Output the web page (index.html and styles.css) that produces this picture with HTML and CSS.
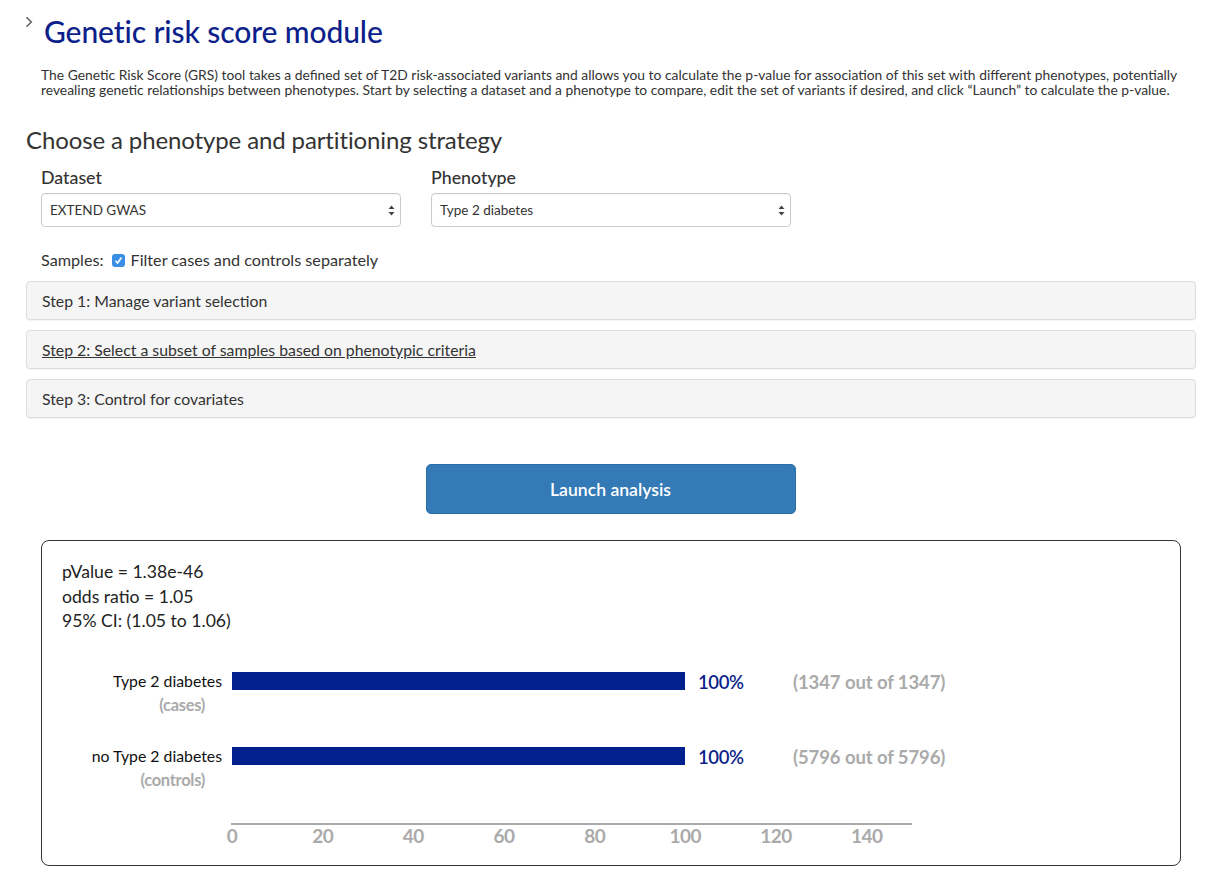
FILE: index.html
```html
<!DOCTYPE html>
<html>
<head>
<meta charset="utf-8">
<link rel="stylesheet" href="styles.css">
</head>
<body>
<div class="page">
  <div class="title-row">
    <svg class="chev" width="8" height="12" viewBox="0 0 8 12"><path d="M1.5 1.2 L6.3 6 L1.5 10.8" fill="none" stroke="#666" stroke-width="1.6"/></svg>
    <h1 class="title">Genetic risk score module</h1>
  </div>
  <p class="intro">The Genetic Risk Score (GRS) tool takes a defined set of T2D risk-associated variants and allows you to calculate the p-value for association of this set with different phenotypes, potentially revealing genetic relationships between phenotypes. Start by selecting a dataset and a phenotype to compare, edit the set of variants if desired, and click “Launch” to calculate the p-value.</p>

  <h2 class="section">Choose a phenotype and partitioning strategy</h2>

  <div class="selectors">
    <div class="field">
      <div class="label">Dataset</div>
      <div class="select"><span>EXTEND GWAS</span><svg width="7" height="11" viewBox="0 0 7 11"><path d="M3.5 0.5 L6.5 4 L0.5 4 Z M3.5 10.5 L6.5 7 L0.5 7 Z" fill="#444"/></svg></div>
    </div>
    <div class="field">
      <div class="label">Phenotype</div>
      <div class="select"><span>Type 2 diabetes</span><svg width="7" height="11" viewBox="0 0 7 11"><path d="M3.5 0.5 L6.5 4 L0.5 4 Z M3.5 10.5 L6.5 7 L0.5 7 Z" fill="#444"/></svg></div>
    </div>
  </div>

  <div class="samples">
    <span>Samples:</span>
    <span class="check"><svg width="9" height="9" viewBox="0 0 9 9"><path d="M1.5 4.8 L3.6 7 L7.5 1.5" fill="none" stroke="#fff" stroke-width="1.6"/></svg></span>
    <span>Filter cases and controls separately</span>
  </div>

  <div class="steps">
    <div class="step">Step 1: Manage variant selection</div>
    <div class="step"><span class="u">Step 2: Select a subset of samples based on phenotypic criteria</span></div>
    <div class="step">Step 3: Control for covariates</div>
  </div>

  <div class="launch-row">
    <button class="launch">Launch analysis</button>
  </div>

  <div class="result">
    <div class="stats">
      <div>pValue = 1.38e-46</div>
      <div>odds ratio = 1.05</div>
      <div>95% CI: (1.05 to 1.06)</div>
    </div>
    <svg class="chart" width="1138" height="224" viewBox="0 0 1138 224">
      <g class="lbl">
        <text x="180" y="53" text-anchor="end" class="name">Type 2 diabetes</text>
        <text x="163" y="77" text-anchor="end" class="sub">(cases)</text>
        <text x="180" y="128" text-anchor="end" class="name">no Type 2 diabetes</text>
        <text x="163" y="152" text-anchor="end" class="sub">(controls)</text>
      </g>
      <rect x="190" y="38" width="453" height="18" fill="#03218e"/>
      <rect x="190" y="113" width="453" height="18" fill="#03218e"/>
      <text x="656" y="55" class="pct">100%</text>
      <text x="656" y="130" class="pct">100%</text>
      <text x="751" y="55" class="cnt">(1347 out of 1347)</text>
      <text x="751" y="130" class="cnt">(5796 out of 5796)</text>
      <line x1="189" y1="190" x2="870" y2="190" stroke="#aaa" stroke-width="2"/>
      <g class="tick" text-anchor="middle">
        <text x="190" y="209">0</text>
        <text x="280.7" y="209">20</text>
        <text x="371.3" y="209">40</text>
        <text x="462" y="209">60</text>
        <text x="552.7" y="209">80</text>
        <text x="643.3" y="209">100</text>
        <text x="734" y="209">120</text>
        <text x="824.7" y="209">140</text>
      </g>
    </svg>
  </div>
</div>
</body>
</html>
```

FILE: styles.css
```css
* { box-sizing: border-box; }
body {
  margin: 0;
  font-family: Lato, "Open Sans", "Liberation Sans", sans-serif;
  color: #333;
  background: #fff;
}
.page {
  padding: 0 19px 0 26px;
}
.title-row {
  display: flex;
  align-items: flex-start;
  padding-top: 13px;
}
.chev {
  margin-top: 3px;
  margin-left: -1px;
}
.title {
  margin: 0 0 0 11px;
  font-size: 30px;
  font-weight: 500;
  color: #0c1f8b;
  line-height: 36px;
  letter-spacing: -0.1px;
}
.intro {
  margin: 18px 0 0 15px;
  font-size: 13.85px;
  line-height: 15px;
  color: #333;
  max-width: 1150px;
}
.section {
  margin: 28px 0 0 0;
  font-size: 24px;
  font-weight: 400;
  line-height: 30px;
  color: #333;
  letter-spacing: -0.12px;
}
.selectors {
  display: flex;
  gap: 30px;
  margin: 10px 0 0 15px;
}
.field { width: 360px; }
.label {
  font-size: 17.8px;
  font-weight: 500;
  line-height: 24px;
  color: #333;
}
.select {
  margin-top: 4px;
  height: 34px;
  border: 1px solid #ccc;
  border-radius: 4px;
  display: flex;
  align-items: center;
  justify-content: space-between;
  padding: 0 5px 0 8px;
  font-size: 13.5px;
  color: #333;
  box-shadow: inset 0 1px 1px rgba(0,0,0,0.04);
}
.samples {
  display: flex;
  align-items: center;
  gap: 7px;
  margin: 23px 0 0 15px;
  font-size: 16.2px;
  line-height: 20px;
}
.check {
  width: 13px;
  height: 13px;
  border-radius: 3px;
  background: #3b8ee6;
  display: flex;
  align-items: center;
  justify-content: center;
  margin: 0 -1px 0 1px;
}
.steps {
  margin-top: 11px;
  display: flex;
  flex-direction: column;
  gap: 10px;
}
.step {
  height: 39px;
  background: #f5f5f5;
  border: 1px solid #ddd;
  border-radius: 4px;
  padding: 0 15px;
  display: flex;
  align-items: center;
  font-size: 15.8px;
  color: #333;
  box-shadow: 0 1px 1px rgba(0,0,0,0.05);
}
.u { text-decoration: underline; }
.launch-row {
  display: flex;
  justify-content: center;
  margin-top: 46px;
  padding-right: 1px;
}
.launch {
  width: 370px;
  height: 50px;
  background: #337ab7;
  border: 1px solid #2e6da4;
  border-radius: 5px;
  color: #fff;
  font-family: inherit;
  font-size: 17.6px;
  font-weight: 600;
}
.result {
  margin: 26px 15px 0 15px;
  width: 1140px;
  border: 1px solid #333;
  border-radius: 8px;
  padding: 19px 0 7px 0;
}
.stats {
  padding-left: 20px;
  font-size: 17.6px;
  line-height: 24.5px;
  color: #222;
}
.chart {
  display: block;
}
.chart text { font-family: Lato, "Open Sans", "Liberation Sans", sans-serif; }
.name { font-size: 15.8px; fill: #111; }
.sub { font-size: 16.5px; fill: #aaa; font-weight: 700; letter-spacing: -0.3px; }
.pct { font-size: 18.5px; fill: #0c1f8b; font-weight: 600; letter-spacing: -0.4px; }
.cnt { font-size: 18.5px; fill: #aaa; font-weight: 700; letter-spacing: -0.1px; }
.tick text { font-size: 19px; fill: #aaa; font-weight: 700; letter-spacing: -0.5px; }
```
